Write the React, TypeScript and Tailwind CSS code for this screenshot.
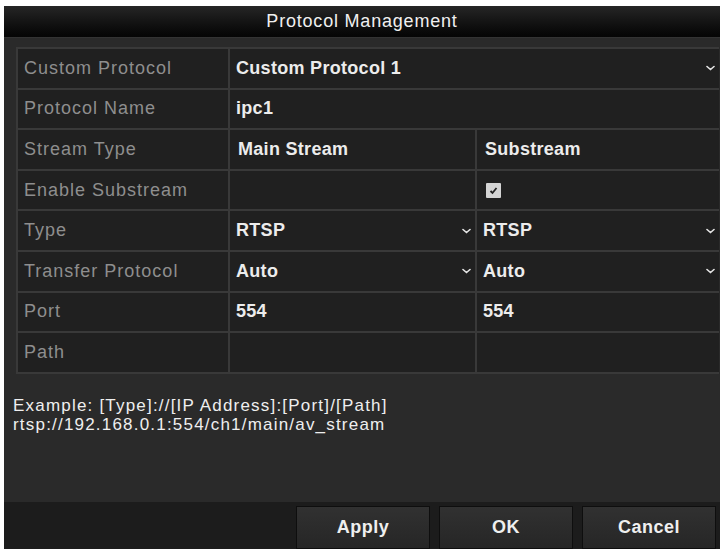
import React from 'react';

const font = { fontFamily: '"Liberation Sans", Arial, sans-serif' };

function Chevron() {
    return (
        <svg width="9" height="6" viewBox="0 0 9 6" className="shrink-0">
            <path d="M1 1.5 L4.5 4.5 L8 1.5" fill="none" stroke="#e6e6e6" strokeWidth="1.6" strokeLinecap="round" />
        </svg>
    );
}

function Label({ children }: { children?: React.ReactNode }) {
    return (
        <div className="bg-[#202020] flex items-center pl-[6px] text-[18px] tracking-[1px] text-[#8e8e8e]">
            {children}
        </div>
    );
}

function Value({
    children,
    span,
    dropdown,
}: {
    children?: React.ReactNode;
    span?: boolean;
    dropdown?: boolean;
}) {
    return (
        <div
            className={`bg-[#202020] flex items-center justify-between pl-[6px] pr-[4px] text-[18px] font-bold tracking-[0.3px] text-[#ececec] ${span ? 'col-span-2' : ''}`}
        >
            <span>{children}</span>
            {dropdown && <Chevron />}
        </div>
    );
}

function Checkbox() {
    return (
        <div className="bg-[#202020] flex items-center pl-[9px]">
            <div className="w-[15px] h-[15px] bg-[#d4d4d4] rounded-[1px] flex items-center justify-center">
                <svg width="11" height="11" viewBox="0 0 11 11">
                    <path d="M2.5 6 L4.5 8 L8.5 3" fill="none" stroke="#222" strokeWidth="1.8" />
                </svg>
            </div>
        </div>
    );
}

export default function App() {
    return (
        <div className="w-[723px] h-[549px] bg-white overflow-hidden" style={font}>
            <div className="ml-[4px] mt-[6px] w-[716px] h-[543px] flex flex-col bg-[#2a2a2a]">
                {/* title bar */}
                <div className="h-[32px] shrink-0 bg-gradient-to-b from-[#262626] via-[#141414] to-[#050505] flex items-center justify-center text-[18px] tracking-[0.8px] text-[#f0f0f0] border-b border-[#333]">
                    Protocol Management
                </div>

                <div className="flex-1 flex flex-col pt-[9px] pl-[12px] pr-[1px]">
                    <div className="grid grid-cols-[210px_245px_242px] auto-rows-[38.6px] gap-[2px] p-[2px] bg-[#393939]">
                        <Label>Custom Protocol</Label>
                        <Value span dropdown>Custom Protocol 1</Value>

                        <Label>Protocol Name</Label>
                        <Value span>ipc1</Value>

                        <Label>Stream Type</Label>
                        <div className="bg-[#202020] flex items-center pl-[8px] text-[18px] font-bold tracking-[0.3px] text-[#ececec]">Main Stream</div>
                        <div className="bg-[#202020] flex items-center pl-[8px] text-[18px] font-bold tracking-[0.3px] text-[#ececec]">Substream</div>

                        <Label>Enable Substream</Label>
                        <div className="bg-[#202020]" />
                        <Checkbox />

                        <Label>Type</Label>
                        <Value dropdown>RTSP</Value>
                        <Value dropdown>RTSP</Value>

                        <Label>Transfer Protocol</Label>
                        <Value dropdown>Auto</Value>
                        <Value dropdown>Auto</Value>

                        <Label>Port</Label>
                        <Value>554</Value>
                        <Value>554</Value>

                        <Label>Path</Label>
                        <Value />
                        <Value />
                    </div>

                    <div className="mt-[22px] -ml-[3px] text-[17px] leading-[19px] tracking-[1.2px] text-[#efefef]">
                        <div>Example: [Type]://[IP Address]:[Port]/[Path]</div>
                        <div>rtsp://192.168.0.1:554/ch1/main/av_stream</div>
                    </div>
                </div>

                {/* button bar */}
                <div className="h-[47px] shrink-0 bg-[#1c1c1c] flex justify-end gap-[9px] pt-[4px] pr-[4px]">
                    {['Apply', 'OK', 'Cancel'].map((b) => (
                        <div
                            key={b}
                            className="w-[134px] bg-gradient-to-b from-[#313131] to-[#262626] border border-[#0e0e0e] flex items-center justify-center text-[18px] font-bold tracking-[0.5px] text-[#efefef]"
                        >
                            {b}
                        </div>
                    ))}
                </div>
            </div>
        </div>
    );
}
